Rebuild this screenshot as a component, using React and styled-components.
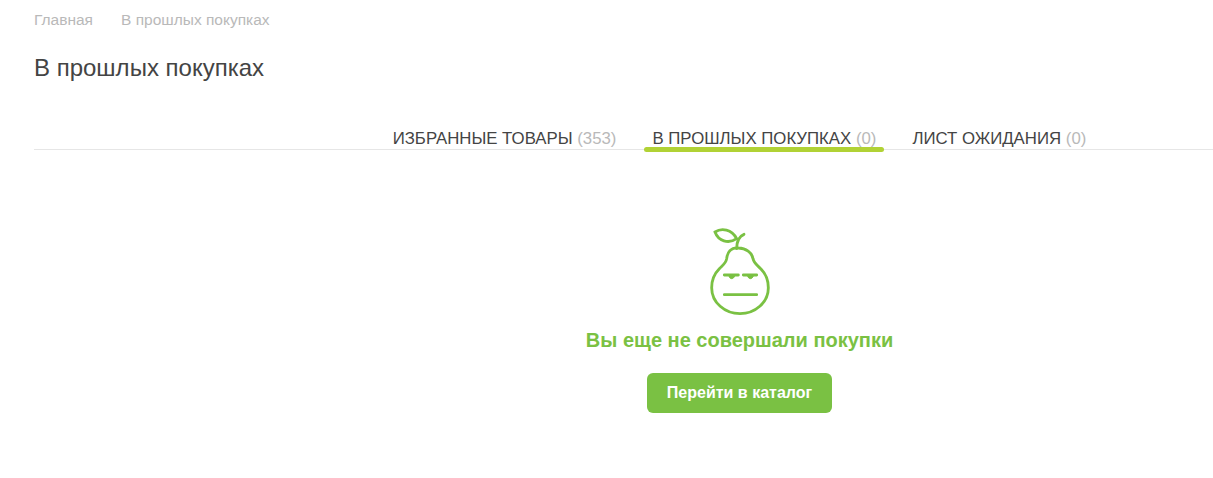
import React from 'react';
import styled, { createGlobalStyle } from 'styled-components';

const GlobalStyle = createGlobalStyle`
  html, body {
    margin: 0;
    background: #fff;
    font-family: "Liberation Sans", Arial, sans-serif;
  }
`

const Page = styled.div`
  height: 478px;
  padding-left: 34px;
  overflow: hidden;
`

const Breadcrumbs = styled.div`
  display: flex;
  gap: 28px;
  padding-top: 12px;
  font-size: 15.5px;
  line-height: 16px;
  color: #b9b9b9;
`

const Title = styled.h1`
  margin: 24px 0 0;
  font-size: 24px;
  line-height: 32px;
  font-weight: 400;
  color: #444;
`

const Tabs = styled.div`
  display: flex;
  justify-content: center;
  gap: 20px;
  margin-top: 43px;
  padding-left: 232px;
  height: 22px;
  border-bottom: 1px solid #e6e6e6;
`

const Tab = styled.div`
  position: relative;
  height: 22px;
  padding: 0 8px;
  font-size: 16.8px;
  line-height: 24px;
  white-space: nowrap;
  color: #444;

  ${props => props.$active && `
    &::after {
      content: '';
      position: absolute;
      left: 0;
      right: 0;
      bottom: -3px;
      height: 5px;
      border-radius: 3px;
      background: #b1d235;
    }
  `}
`

const Count = styled.span`
  color: #b9b9b9;
`

const Empty = styled.div`
  display: flex;
  flex-direction: column;
  align-items: center;
  padding-left: 232px;
  padding-top: 76px;
`

const Pear = styled.svg`
  display: block;
  width: 60px;
  height: 90px;
  fill: none;
  stroke: #7ac143;
  stroke-width: 8.5;
  stroke-linecap: round;
`

const EyeLid = styled.path`
  fill: #7ac143;
  stroke-width: 3;
`

const Message = styled.div`
  margin-top: 12px;
  font-size: 20px;
  line-height: 24px;
  font-weight: 700;
  color: #7ac143;
`

const Button = styled.button`
  margin-top: 21px;
  width: 185px;
  height: 40px;
  padding: 0;
  border: 0;
  border-radius: 6px;
  background: #7ac143;
  color: #fff;
  font-family: inherit;
  font-size: 16px;
  font-weight: 700;
`

const tabs = [
  { name: 'ИЗБРАННЫЕ ТОВАРЫ', count: 353 },
  { name: 'В ПРОШЛЫХ ПОКУПКАХ', count: 0, active: true },
  { name: 'ЛИСТ ОЖИДАНИЯ', count: 0 },
]

export default function App() {
  return (
    <Page>
      <GlobalStyle />
      <Breadcrumbs>
        <span>Главная</span>
        <span>В прошлых покупках</span>
      </Breadcrumbs>
      <Title>В прошлых покупках</Title>
      <Tabs>
        {tabs.map(tab => (
          <Tab key={tab.name} $active={tab.active}>
            {tab.name} <Count>({tab.count})</Count>
          </Tab>
        ))}
      </Tabs>
      <Empty>
        <Pear viewBox="60 20 180 270">
          <path d="M145 86C122 84 112 100 110 118C108 132 98 138 88 148C74 162 65 182 65 205C65 250 105 283 150 283C195 283 235 250 235 205C235 182 226 162 212 148C202 138 192 132 189 118C186 100 168 87 145 86Z" />
          <path d="M75 38C95 25 125 30 140 58C115 75 85 65 75 38Z" />
          <path d="M162 45C150 50 140 65 140 88" />
          <path d="M103 167H145M160 167H200M103 226H200" />
          <EyeLid d="M117 170C119 181 131 181 134 170ZM173 170C175 181 187 181 190 170Z" />
        </Pear>
        <Message>Вы еще не совершали покупки</Message>
        <Button>Перейти в каталог</Button>
      </Empty>
    </Page>
  );
}
